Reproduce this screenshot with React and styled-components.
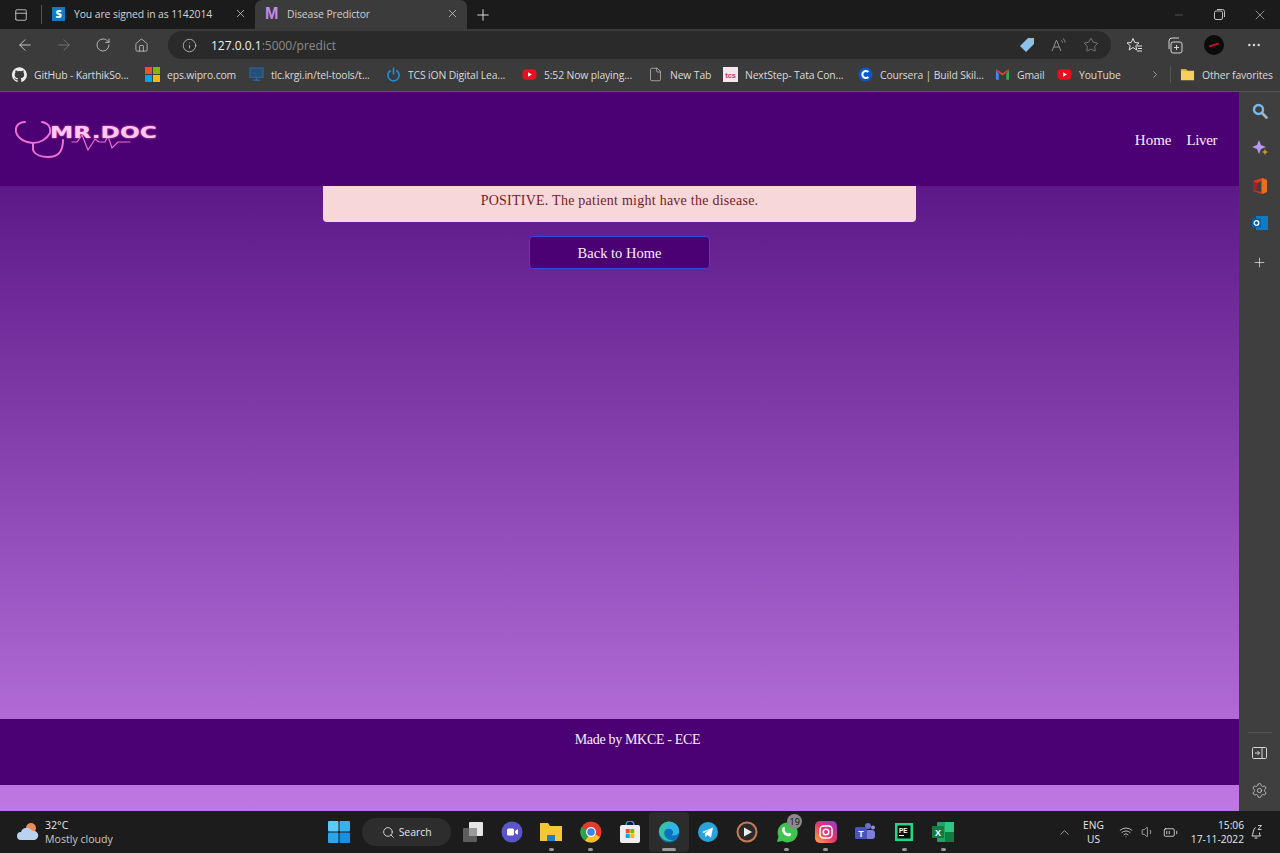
import React from "react";
import styled, { createGlobalStyle } from "styled-components";
import {
  ArrowLeft, ArrowRight, RotateCw, Home as HomeIcon, Info, Minus, X, Plus, ChevronRight, ChevronUp,
  File, Search, Wifi, Volume1, BatteryMedium, Settings, Star, MoreHorizontal, PanelRight,
} from "lucide-react";

const Global = createGlobalStyle`
  html, body { margin: 0; padding: 0; background: #1c1c1c; }
  * { box-sizing: border-box; }
  #root { width: 1280px; height: 853px; overflow: hidden; }
`;
const ui = `"Open Sans", "Noto Sans", sans-serif`;
const serif = `"Liberation Serif", "DejaVu Serif", serif`;

const Screen = styled.div`
  width: 1280px; height: 853px; display: flex; flex-direction: column; font-family: ${ui};
`;
const TitleBar = styled.div`
  height: 29px; background: #1b1b1b; display: flex; align-items: stretch; color: #d8d8d8; flex: none;
`;
const WinTabsIcon = styled.div`
  width: 42px; display: flex; align-items: center; justify-content: center; padding-left: 1px;
  border-right: 1px solid #555; margin: 5px 0;
`;
const Tab = styled.div`
  width: ${p => p.$w}px; display: flex; align-items: center;
  padding: 0 8px 2px 10px; font-size: 10.4px; letter-spacing: -.1px; white-space: nowrap;
  background: ${p => p.$active ? "#3b3b3b" : "transparent"};
  border-radius: 7px 7px 0 0;
  color: ${p => p.$active ? "#cfcfcf" : "#d4d4d4"};
`;
const TabTitle = styled.span` flex: 1; margin-left: 9px; `;
const FavS = styled.span`
  width: 13px; height: 14px; background: #0d7cc4; color: #fff; font-weight: 800; font-size: 11px;
  display: flex; align-items: center; justify-content: center; flex: none;
`;
const FavM = styled.span`
  width: 13px; color: #c58bea; font-weight: 800; font-size: 16px; font-family: "Liberation Sans", sans-serif;
  display: flex; align-items: center; justify-content: center; flex: none;
`;
const Spacer = styled.div` flex: 1; `;
const WindowButton = styled.div`
  width: ${p => p.$w}px; display: flex; align-items: center; justify-content: center; color: #c9c9c9;
`;
const NewTab = styled.div` width: 32px; display: flex; align-items: center; justify-content: center; color: #ddd; `;
const Toolbar = styled.div`
  height: 31px; flex: none; background: #3b3b3b; display: flex; align-items: center; padding: 1px 0 0 5px;
`;
const NavButton = styled.div`
  width: 39px; display: flex; align-items: center; justify-content: center;
  color: ${p => p.$off ? "#777" : "#d0d0d0"};
`;
const AddressBar = styled.div`
  width: 943px; height: 28px; margin-left: 7px; background: #2a2a2a; border-radius: 14px; display: flex;
  align-items: center; padding: 0 12px 0 14px; color: #cfcfcf; font-size: 12px;
`;
const Url = styled.span` margin-left: 14px; color: #f0f0f0; `;
const UrlMuted = styled.span` color: #8a8a8a; `;
const AddrIcons = styled.div` display: flex; align-items: center; gap: 16px; color: #9a9a9a; `;
const ToolIcons = styled.div`
  display: flex; align-items: center; margin-left: 3px; color: #d6d6d6;
`;
const ToolIcon = styled.div` width: 40px; display: flex; justify-content: center; `;
const Avatar = styled.div`
  width: 20px; height: 20px; border-radius: 50%; background: #0b0b0b; position: relative;
  &::after { content: ""; position: absolute; left: 5px; top: 9px; width: 10px; height: 2px; background: #b3122a; transform: rotate(-18deg); }
`;
const Bookmarks = styled.div`
  height: 32px; flex: none; background: #3b3b3b; border-bottom: 1px solid #555; display: flex;
  align-items: center; padding: 0 0 2px 12px; color: #d9d9d9; font-size: 10.4px; letter-spacing: -.15px;
`;
const Bookmark = styled.div`
  width: ${p => p.$w}px; flex: none; display: flex; align-items: center; gap: 7px; white-space: nowrap;
`;
const BookIcon = styled.span` width: 15px; height: 15px; flex: none; display: flex; align-items: center; justify-content: center; `;
const BarSep = styled.div` width: 1px; height: 17px; background: #555; margin: 0 9px; flex: none; `;
const Chevron = styled.div` width: 12px; margin-left: 17px; color: #d0d0d0; display:flex; justify-content:center; flex:none; `;

const Workspace = styled.div` flex: none; height: 719px; display: flex; `;
const Page = styled.div`
  width: 1239px; display: flex; flex-direction: column;
  background: linear-gradient(180deg, #4f0a7a 0%, #bf78e3 100%);
  color: #fff; font-family: ${serif};
`;
const Header = styled.header`
  height: 94px; flex: none; background: #4b0073; display: flex; align-items: center; justify-content: space-between;
  padding: 0 22px 0 15px;
`;
const Logo = styled.svg` width: 145px; height: 40px; display: block; `;
const Nav = styled.nav` display: flex; gap: 15px; font-size: 15px; margin-top: 2px; `;
const NavLink = styled.a`
  color: #fbeefc; text-decoration: none; letter-spacing: ${p => p.$tight ? "-.4px" : "0"};
`;
const Main = styled.main` flex: 1; display: flex; flex-direction: column; align-items: center; `;
const Alert = styled.div`
  width: 593px; height: 36px; background: #f8d7da; color: #721c24; border-radius: 0 0 4px 4px;
  display: flex; align-items: center; justify-content: center; font-size: 14px; padding-bottom: 7px;
  letter-spacing: .25px;
`;
const BackButton = styled.button`
  width: 181px; height: 33px; margin-top: 14px; background: #4b0073; color: #fbeefc; border: 1px solid #3b46e0;
  border-radius: 4px; font-family: ${serif}; font-size: 14.5px; padding: 1px 0 0;
`;
const Footer = styled.footer`
  height: 66px; flex: none; background: #4b0073; text-align: center; padding: 13px 0 0 36px; font-size: 14px;
  letter-spacing: -.33px; color: #fbeefc;
`;
const PageEnd = styled.div` height: 26px; flex: none; `;

const Sidebar = styled.aside`
  width: 41px; background: #3f3f3f; display: flex; flex-direction: column; align-items: center; padding-bottom: 2px; color: #d6d6d6;
`;
const SideIcon = styled.div`
  height: 37.5px; flex: none; display: flex; align-items: center; justify-content: center;
  margin-top: ${p => p.$mt || 0}px; color: ${p => p.$bright ? "#f0f0f0" : "inherit"};
`;
const SideRule = styled.div` width: 24px; height: 1px; background: #555; margin: auto 0 1px; `;

const Taskbar = styled.div`
  height: 42px; flex: none; background: #1c1c1c; display: flex; align-items: center; color: #e6e6e6; position: relative;
`;
const Weather = styled.div` width: 319.5px; display: flex; align-items: center; padding-left: 16px; gap: 5px; font-size: 10.6px; line-height: 14px; flex: none; `;
const WeatherMuted = styled.div` color: #c8c8c8; `;
const Center = styled.div` display: flex; align-items: center; flex: none; `;
const TaskIcon = styled.div`
  width: 39.2px; height: 40px; display: flex; align-items: center; justify-content: center; position: relative; flex: none;
  background: ${p => p.$active ? "#2c2c2c" : "transparent"}; border-radius: 4px;
  &::after {
    content: ""; display: ${p => p.$dot ? "block" : "none"}; position: absolute; bottom: 1px; left: 50%;
    width: ${p => p.$active ? 14 : 5}px; height: 3px; margin-left: ${p => p.$active ? -7 : -2.5}px; border-radius: 2px;
    background: #9a9a9a;
  }
`;
const SearchPill = styled.div`
  width: 89px; height: 28px; margin: 0 2.4px 0 3.4px; background: #2d2d2d; border-radius: 14px; display: flex; align-items: center;
  justify-content: center; gap: 4px; font-size: 10.4px; flex: none;
`;
const Badge = styled.span`
  position: absolute; top: 2px; right: 4px; width: 15px; height: 15px; border-radius: 50%; background: #8a8a8a; color: #111;
  font-size: 9px; display: flex; align-items: center; justify-content: center;
`;
const Tray = styled.div` margin-left: auto; display: flex; align-items: center; padding-right: 16px; font-size: 10.2px; `;
const Lang = styled.div` text-align: center; line-height: 14px; margin: 0 15px 0 11px; `;
const Clock = styled.div` text-align: right; line-height: 14px; margin: 0 6px 0 13px; `;
const TrayIcons = styled.div` display: flex; align-items: center; gap: 8px; `;

const Logo_ = () => (
  <Logo viewBox="0 0 145 40">
    <defs>
      <filter id="g" x="-20%" y="-40%" width="140%" height="180%"><feGaussianBlur stdDeviation="1.1" /></filter>
    </defs>
    <g fill="none" stroke="#f06fd4" strokeWidth="2" strokeLinecap="round">
      <path d="M10 3 C3 3 0 8 1 13 C3 20 11 24 18 24 C25 24 32 20 35 14 C36 8 33 4 27 3" />
      <path d="M18 24 L18 31 C20 36 27 38 33 38 C41 38 48 35 48 21" />
      <path d="M57 23 L62 23 L67 16 L73 31 L80 20 L84 23 L90 23 L93 17 L97 29 L103 23 L115 23" strokeWidth="1.2" />
    </g>
    <text x="35" y="19" fontFamily="DejaVu Sans" fontWeight="700" fontSize="15" textLength="107" lengthAdjust="spacingAndGlyphs" fill="#ff5fd0" filter="url(#g)">MR.DOC</text>
    <text x="35" y="19" fontFamily="DejaVu Sans" fontWeight="700" fontSize="15" textLength="107" lengthAdjust="spacingAndGlyphs" fill="#ffc9ee">MR.DOC</text>
  </Logo>
);

const GitHub = () => (
  <svg width="15" height="15" viewBox="0 0 24 24" fill="#eee"><path d="M12 .5a12 12 0 0 0-3.800 23.400c.6.100.8-.3.8-.6v-2.200c-3.300.7-4-1.400-4-1.400-.6-1.400-1.400-1.800-1.400-1.800-1.100-.7.100-.7.100-.7 1.200.1 1.800 1.200 1.800 1.200 1.100 1.800 2.800 1.300 3.500 1 .1-.8.4-1.300.8-1.600-2.700-.3-5.500-1.300-5.500-5.900 0-1.300.5-2.400 1.200-3.200-.1-.3-.5-1.500.1-3.200 0 0 1-.3 3.300 1.200a11.500 11.500 0 0 1 6 0c2.300-1.500 3.300-1.200 3.300-1.200.6 1.700.2 2.900.1 3.200.8.8 1.200 1.900 1.200 3.200 0 4.600-2.800 5.600-5.500 5.900.4.400.8 1.100.8 2.200v3.300c0 .3.200.7.800.6A12 12 0 0 0 12 .5z"/></svg>
);
const MsLogo = ({ size = 15 }) => (
  <svg width={size} height={size} viewBox="0 0 16 16"><rect width="7.500" height="7.500" fill="#f25022"/><rect x="8.500" width="7.500" height="7.500" fill="#7fba00"/><rect y="8.500" width="7.500" height="7.500" fill="#00a4ef"/><rect x="8.500" y="8.500" width="7.500" height="7.500" fill="#ffb900"/></svg>
);
const Monitor = () => (
  <svg width="15" height="15" viewBox="0 0 16 16"><rect x="1" y="1" width="14" height="10" fill="#274f78" stroke="#2e6ba8"/><path d="M4 14h8M8 11v3" stroke="#2e6ba8" strokeWidth="1.500"/></svg>
);
const Power = () => (
  <svg width="15" height="15" viewBox="0 0 16 16" fill="none" stroke="#1f8fe0" strokeWidth="1.700" strokeLinecap="round"><path d="M8 1.500v6"/><path d="M4.500 4a6 6 0 1 0 7 0"/></svg>
);
const YouTube = () => (
  <svg width="15" height="15" viewBox="0 0 16 16"><rect x=".5" y="2.500" width="15" height="11" rx="4" fill="#e8101c"/><path d="M6.500 5.500l4 2.500-4 2.500z" fill="#fff"/></svg>
);
const Tcs = () => (
  <svg width="15" height="15" viewBox="0 0 16 16"><rect width="16" height="16" fill="#f7e6ee"/><text x="8" y="11.500" fontSize="8" textAnchor="middle" fontFamily="Liberation Sans" fontWeight="700" fill="#d9336c">tcs</text></svg>
);
const Coursera = () => (
  <svg width="15" height="15" viewBox="0 0 16 16"><circle cx="8" cy="8" r="7.500" fill="#0b57d0"/><path d="M11 5.400a3.700 3.700 0 1 0 0 5.200" fill="none" stroke="#fff" strokeWidth="2.200"/></svg>
);
const Gmail = () => (
  <svg width="15" height="15" viewBox="0 0 16 16"><path d="M1 3.500v10h3V7z" fill="#4285f4"/><path d="M15 3.500v10h-3V7z" fill="#34a853"/><path d="M1 3.500 8 9l7-5.500v-1L12 4 8 7 4 4 1 2.500z" fill="#ea4335"/></svg>
);
const Folder = () => (
  <svg width="15" height="15" viewBox="0 0 16 16"><path d="M1 2h5l2 2h7v10H1z" fill="#f6cf5e"/><path d="M1 2h5l2 2H1z" fill="#d9a93a"/></svg>
);
const Tag = () => (
  <svg width="16" height="16" viewBox="0 0 16 16"><path d="M9 1h6v6l-8 8-6-6z" fill="#8cc1ee"/><circle cx="12.500" cy="3.500" r="1" fill="#c9c33a"/></svg>
);
const Magnifier = () => (
  <svg width="16" height="16" viewBox="0 0 16 16" fill="none"><circle cx="6.500" cy="6.500" r="4.500" stroke="#74b8ee" strokeWidth="2.400"/><path d="M10 10l4.500 4.500" stroke="#9fb6c8" strokeWidth="2.600" strokeLinecap="round"/></svg>
);
const Sparkle = () => (
  <svg width="18" height="18" viewBox="0 0 18 18"><path d="M8 1l2 5 5 2-5 2-2 5-2-5-5-2 5-2z" fill="#b996f2"/><path d="M14 10l1 2 2 1-2 1-1 2-1-2-2-1 2-1z" fill="#c69b2a"/></svg>
);
const Office = () => (
  <svg width="16" height="18" viewBox="0 0 16 18"><path d="M1 4l9-3 5 2v12l-5 2-9-3 1-.500 7 1.500V4.500L5 6v6l-4 2z" fill="#d83b1f"/><path d="M10 1l5 2v12l-5 2z" fill="#eb6c1b"/><path d="M1 4l4 2v6l-4 2z" fill="#a81f24"/></svg>
);
const Outlook = () => (
  <svg width="16" height="16" viewBox="0 0 16 16"><rect x="4" y="1" width="12" height="14" fill="#0d7cc4"/><rect x="0" y="3.500" width="9" height="9" fill="#0a5ea8"/><circle cx="4.500" cy="8" r="2.300" fill="none" stroke="#fff" strokeWidth="1.300"/></svg>
);
const Cloud = () => (
  <svg width="24" height="20" viewBox="0 0 24 20"><circle cx="15" cy="6" r="5" fill="#f08a5a"/><path d="M5 18a4 4 0 0 1 0-8 6 6 0 0 1 11-1 4.500 4.500 0 0 1 3 9z" fill="#b9d2ef"/></svg>
);
const WinLogo = () => (
  <svg width="22" height="22" viewBox="0 0 22 22"><rect width="10.500" height="10.500" rx="1" fill="#5ec8f8"/><rect x="11.500" width="10.500" height="10.500" rx="1" fill="#38b1f0"/><rect y="11.500" width="10.500" height="10.500" rx="1" fill="#2ba6ec"/><rect x="11.500" y="11.500" width="10.500" height="10.500" rx="1" fill="#1a8fdd"/></svg>
);
const TaskView = () => (
  <svg width="22" height="22" viewBox="0 0 22 22"><rect x="1" y="7" width="14" height="14" rx="1" fill="#5d5d5d"/><rect x="7" y="1" width="14" height="14" rx="1" fill="#e6e6e6"/><rect x="7" y="7" width="8" height="8" fill="#9a9a9a"/></svg>
);
const Meet = () => (
  <svg width="22" height="22" viewBox="0 0 22 22"><circle cx="11" cy="11" r="10.500" fill="#5b55c9"/><rect x="6" y="7.500" width="7" height="7" rx="1.500" fill="#fff"/><path d="M14 10l3-2v6l-3-2z" fill="#fff"/></svg>
);
const Explorer = () => (
  <svg width="22" height="20" viewBox="0 0 22 20"><path d="M0 1h8l2 3h12v15H0z" fill="#f4c63a"/><rect x="7" y="13" width="8" height="6" fill="#1e80c8"/></svg>
);
const Chrome = () => (
  <svg width="22" height="22" viewBox="0 0 22 22"><circle cx="11" cy="11" r="10.500" fill="#e33b2e"/><path d="M11 11 20 16A10.500 10.500 0 0 1 5 19.700z" fill="#f6c12d" /><path d="M11 11 5 19.700A10.500 10.500 0 0 1 1.500 6z" fill="#2ca24c"/><circle cx="11" cy="11" r="5" fill="#fff"/><circle cx="11" cy="11" r="3.800" fill="#3b82ee"/></svg>
);
const Store = () => (
  <svg width="20" height="22" viewBox="0 0 20 22"><rect y="4" width="20" height="18" rx="2" fill="#eee"/><path d="M6 4a4 4 0 0 1 8 0" fill="none" stroke="#39a0e0" strokeWidth="1.500"/><g transform="translate(5.500 8)"><MsLogo size={9} /></g></svg>
);
const Edge = () => (
  <svg width="22" height="22" viewBox="0 0 22 22"><circle cx="11" cy="11" r="10.500" fill="#0f6fc0"/><path d="M1 11a10 10 0 0 1 20-1c0 4-5 5-7 4 3-3 0-7-4-6.500C6 8 5 13 8 16.500c2 2.500 6 3.500 9 2A10.500 10.500 0 0 1 1 11z" fill="#36c4a0"/><path d="M21 10c0 4-5 5-7 4 3-3 0-7-4-6.500L6 9C8 3 14 .5 18 4c2 1.500 3 3.500 3 6z" fill="#2fb6e8"/></svg>
);
const Telegram = () => (
  <svg width="20" height="20" viewBox="0 0 20 20"><circle cx="10" cy="10" r="10" fill="#2aa2dc"/><path d="M4 10l11-4.500-2 10-3.500-2.500-2 2-.5-3.500 5-4.500-6 4z" fill="#fff"/></svg>
);
const Player = () => (
  <svg width="22" height="22" viewBox="0 0 22 22"><circle cx="11" cy="11" r="9.500" fill="#2b2b2b" stroke="#c77b54" strokeWidth="2"/><path d="M8 6.500l8 4.500-8 4.500z" fill="#eee"/></svg>
);
const WhatsApp = () => (
  <svg width="22" height="22" viewBox="0 0 22 22"><path d="M1 21l1.500-5.500A10 10 0 1 1 6.500 20z" fill="#3fc451"/><path d="M7.500 6c2 0 1.500 2 1 3 .5 1.500 2 3 3.500 3.500 1-.5 3-1 3 1 0 2-3 2.500-6 .5S5 8 7.500 6z" fill="#fff"/></svg>
);
const Instagram = () => (
  <svg width="22" height="22" viewBox="0 0 22 22"><defs><linearGradient id="ig" x1="0" y1="1" x2="1" y2="0"><stop offset="0" stopColor="#f7b23b"/><stop offset=".5" stopColor="#e8336e"/><stop offset="1" stopColor="#8a3cd0"/></linearGradient></defs><rect width="22" height="22" rx="5" fill="url(#ig)"/><rect x="5" y="5" width="12" height="12" rx="3.500" fill="none" stroke="#fff" strokeWidth="1.500"/><circle cx="11" cy="11" r="2.800" fill="none" stroke="#fff" strokeWidth="1.500"/></svg>
);
const Teams = () => (
  <svg width="22" height="20" viewBox="0 0 22 20"><circle cx="14" cy="4" r="3" fill="#6a6fd0"/><circle cx="19" cy="5.500" r="2" fill="#8c90e0"/><rect x="11" y="8" width="10" height="9" rx="3" fill="#7b80d8"/><rect x="1" y="5" width="12" height="12" rx="1.500" fill="#4b53bc"/><text x="7" y="14.500" textAnchor="middle" fontSize="9" fontWeight="700" fontFamily="Liberation Sans" fill="#fff">T</text></svg>
);
const PyCharm = () => (
  <svg width="18" height="18" viewBox="0 0 18 18"><rect width="18" height="18" fill="#21d789"/><rect x="2.500" y="2.500" width="13" height="13" fill="#0b0b0b"/><text x="4" y="9.500" fontSize="6.500" fontWeight="700" fontFamily="Liberation Sans" fill="#fff">PE</text><rect x="4" y="12" width="5" height="1" fill="#fff"/></svg>
);
const Excel = () => (
  <svg width="22" height="20" viewBox="0 0 22 20"><rect x="5" y="0" width="17" height="20" rx="1" fill="#21a366"/><rect x="13" y="0" width="9" height="10" fill="#33c481"/><rect x="13" y="10" width="9" height="10" fill="#107c41"/><rect x="0" y="4" width="12" height="12" rx="1" fill="#107c41"/><text x="6" y="13.500" textAnchor="middle" fontSize="9" fontWeight="700" fontFamily="Liberation Sans" fill="#fff">X</text></svg>
);
const Notif = () => (
  <svg width="14" height="16" viewBox="0 0 14 16" fill="none" stroke="#ddd"><path d="M5.500 3.500C3 5 3 11 2 12h8.500c-.7-.7-.9-2-1-3.500"/><path d="M4.500 14h3"/><path d="M8 1.500h3.500L8 5.500h3.500" strokeWidth=".9"/></svg>
);
const Collections = () => (
  <svg width="17" height="17" viewBox="0 0 17 17" fill="none" stroke="#d6d6d6"><rect x="5" y="5" width="11" height="11" rx="2"/><path d="M3 12V4a3 3 0 0 1 3-3h7"/><path d="M10.500 8v5M8 10.500h5"/></svg>
);
const Favs = () => (
  <svg width="17" height="17" viewBox="0 0 17 17" fill="none" stroke="#e0e0e0"><path d="M7 1.500l1.800 4 4.200.4-3.200 2.800 1 4.300L7 10.500 3.200 13l1-4.300L1 5.900l4.200-.4z"/><path d="M11 9h5M12 11.500h4M11 14h5"/></svg>
);
const Gear = () => <Settings size={17} strokeWidth={1.1} />;

const bookmarks = [
  { w: 133, i: <GitHub />, t: "GitHub - KarthikSo..." },
  { w: 104, i: <MsLogo />, t: "eps.wipro.com" },
  { w: 137, i: <Monitor />, t: "tlc.krgi.in/tel-tools/t..." },
  { w: 136, i: <Power />, t: "TCS iON Digital Lea..." },
  { w: 126, i: <YouTube />, t: "5:52 Now playing..." },
  { w: 75, i: <File size={15} strokeWidth={1} />, t: "New Tab" },
  { w: 135, i: <Tcs />, t: "NextStep- Tata Con..." },
  { w: 137, i: <Coursera />, t: "Coursera | Build Skil..." },
  { w: 62, i: <Gmail />, t: "Gmail" },
  { w: 75, i: <YouTube />, t: "YouTube" },
];

const taskItems = [
  { i: <Meet /> }, { i: <Explorer />, dot: 1 }, { i: <Chrome />, dot: 1 }, { i: <Store /> }, { i: <Edge />, dot: 1, active: 1 },
  { i: <Telegram /> }, { i: <Player /> }, { i: <WhatsApp />, dot: 1, badge: "19" }, { i: <Instagram />, dot: 1 },
  { i: <Teams /> }, { i: <PyCharm />, dot: 1 }, { i: <Excel />, dot: 1 },
];

export default function App() {
  return (
    <Screen>
      <Global />
      <TitleBar>
        <WinTabsIcon><PanelRight size={14} strokeWidth={1.4} style={{ transform: "rotate(-90deg)" }} /></WinTabsIcon>
        <Tab $w={213}>
          <FavS>S</FavS><TabTitle>You are signed in as 1142014</TabTitle><X size={13} strokeWidth={1.4} />
        </Tab>
        <Tab $w={212} $active>
          <FavM>M</FavM><TabTitle>Disease Predictor</TabTitle><X size={13} strokeWidth={1.4} />
        </Tab>
        <NewTab><Plus size={18} strokeWidth={1.3} /></NewTab>
        <Spacer />
        <WindowButton $w={40}><Minus size={12} strokeWidth={1} color="#888" /></WindowButton>
        <WindowButton $w={40}><svg width="11" height="11" viewBox="0 0 11 11" fill="none" stroke="#c0c0c0"><rect x=".5" y="2" width="8" height="8.500" rx="1.500"/><path d="M3 .5h5.500a2 2 0 0 1 2 2V8"/></svg></WindowButton>
        <WindowButton $w={41}><X size={16} strokeWidth={1} /></WindowButton>
      </TitleBar>

      <Toolbar>
        <NavButton><ArrowLeft size={18} strokeWidth={1.2} /></NavButton>
        <NavButton $off><ArrowRight size={18} strokeWidth={1.2} /></NavButton>
        <NavButton><RotateCw size={16} strokeWidth={1.2} /></NavButton>
        <NavButton><HomeIcon size={15} strokeWidth={1.2} /></NavButton>
        <AddressBar>
          <Info size={15} strokeWidth={1.2} />
          <Url>127.0.0.1<UrlMuted>:5000/predict</UrlMuted></Url>
          <Spacer />
          <AddrIcons>
            <Tag />
            <svg width="16" height="14" viewBox="0 0 16 14" fill="none" stroke="#8f8f8f"><path d="M1 13 5.500 2 10 13M3 9h5"/><path d="M10 2c1 .5 1.500 1.500 1.500 2.500M12 .5c1.500 1 2 2.500 2 4"/></svg>
            <Star size={16} strokeWidth={1} />
          </AddrIcons>
        </AddressBar>
        <ToolIcons>
          <ToolIcon><Favs /></ToolIcon>
          <ToolIcon><Collections /></ToolIcon>
          <ToolIcon><Avatar /></ToolIcon>
          <ToolIcon><MoreHorizontal size={16} strokeWidth={1.8} /></ToolIcon>
        </ToolIcons>
      </Toolbar>

      <Bookmarks>
        {bookmarks.map(b => (
          <Bookmark key={b.t + b.w} $w={b.w}><BookIcon>{b.i}</BookIcon>{b.t}</Bookmark>
        ))}
        <Chevron><ChevronRight size={15} strokeWidth={1.2} /></Chevron>
        <BarSep />
        <Bookmark $w={80}><BookIcon><Folder /></BookIcon>Other favorites</Bookmark>
      </Bookmarks>

      <Workspace>
        <Page>
          <Header>
            <Logo_ />
            <Nav>
              <NavLink>Home</NavLink>
              <NavLink $tight>Liver</NavLink>
            </Nav>
          </Header>
          <Main>
            <Alert>POSITIVE. The patient might have the disease.</Alert>
            <BackButton>Back to Home</BackButton>
          </Main>
          <Footer>Made by MKCE - ECE</Footer>
          <PageEnd />
        </Page>
        <Sidebar>
          <SideIcon><Magnifier /></SideIcon>
          <SideIcon><Sparkle /></SideIcon>
          <SideIcon><Office /></SideIcon>
          <SideIcon><Outlook /></SideIcon>
          <SideIcon $mt={2} $bright><Plus size={15} strokeWidth={1.1} /></SideIcon>
          <SideRule />
          <SideIcon><svg width="15" height="12" viewBox="0 0 15 12" fill="none" stroke="#d6d6d6"><rect x=".5" y=".5" width="14" height="11" rx="1"/><path d="M10 .5v11M3 6h4.500M5.500 4l2 2-2 2"/></svg></SideIcon>
          <SideIcon><Gear /></SideIcon>
        </Sidebar>
      </Workspace>

      <Taskbar>
        <Weather>
          <Cloud />
          <div>
            <div>32°C</div>
            <WeatherMuted>Mostly cloudy</WeatherMuted>
          </div>
        </Weather>
        <Center>
          <TaskIcon><WinLogo /></TaskIcon>
          <SearchPill><Search size={13} strokeWidth={1.6} />Search</SearchPill>
          <TaskIcon><TaskView /></TaskIcon>
          {taskItems.map((t, n) => (
            <TaskIcon key={n} $dot={t.dot} $active={t.active}>
              {t.i}
              {t.badge && <Badge>{t.badge}</Badge>}
            </TaskIcon>
          ))}
        </Center>
        <Tray>
          <ChevronUp size={15} strokeWidth={1} />
          <Lang><div>ENG</div><div>US</div></Lang>
          <TrayIcons>
            <Wifi size={14} strokeWidth={1.3} />
            <Volume1 size={14} strokeWidth={1.1} />
            <BatteryMedium size={15} strokeWidth={1.3} />
          </TrayIcons>
          <Clock><div>15:06</div><div>17-11-2022</div></Clock>
          <Notif />
        </Tray>
      </Taskbar>
    </Screen>
  );
}
